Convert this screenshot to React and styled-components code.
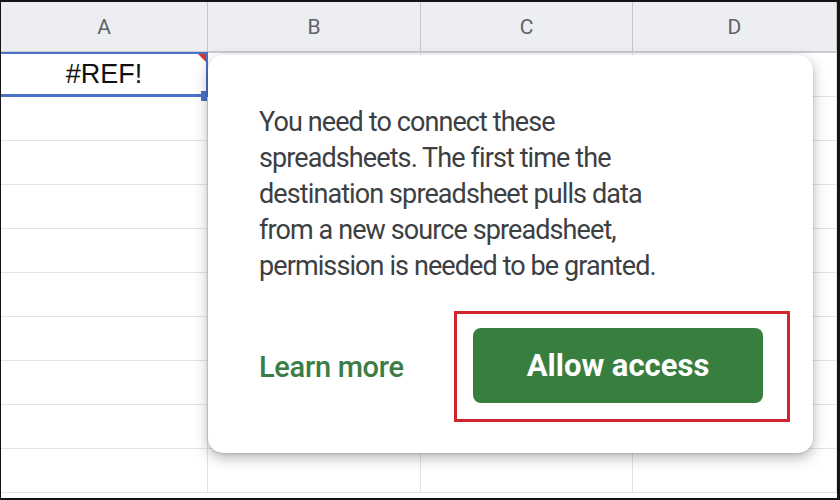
import React from "react";
import styled, { createGlobalStyle } from "styled-components";

const Global = createGlobalStyle`
  html, body { margin: 0; padding: 0; background: #111; }
  body { width: 840px; height: 500px; overflow: hidden; }
  * { box-sizing: border-box; }
`;

const Page = styled.div`
  width: 840px;
  height: 500px;
  padding: 2px 3px 2px 1px;
  background: #141414;
`;

const Sheet = styled.div`
  position: relative;
  width: 100%;
  height: 100%;
  background: #ffffff;
  overflow: hidden;
`;

const COLS = "207px 213px 212px 1fr";

const HeaderRow = styled.div`
  display: grid;
  grid-template-columns: ${COLS};
  height: 51px;
  background: #eceef1;
  border-bottom: 2px solid #c9cbce;
`;

const HeaderCell = styled.div`
  display: flex;
  align-items: center;
  justify-content: center;
  border-right: 1px solid #c4c6c9;
  font-family: Roboto, "Liberation Sans", sans-serif;
  font-size: 21px;
  color: #5f6368;
`;

const Row = styled.div`
  display: grid;
  grid-template-columns: ${COLS};
  height: 44px;
  border-bottom: 1px solid #e2e3e4;
`;

const Cell = styled.div`
  position: relative;
  display: flex;
  align-items: center;
  justify-content: center;
  border-right: 1px solid #e2e3e4;
  font-family: "Liberation Sans", Arial, sans-serif;
  font-size: 27px;
  color: #111;
`;

const Selection = styled.div`
  position: absolute;
  left: -4px;
  right: -1px;
  top: -1px;
  bottom: -1px;
  border: 2px solid #4a72c9;
  border-bottom-width: 3px;
  pointer-events: none;
`;

const Handle = styled.div`
  position: absolute;
  right: -1px;
  bottom: -5px;
  width: 7px;
  height: 10px;
  background: #4a72c9;
`;

const ErrorMark = styled.div`
  position: absolute;
  right: 1px;
  top: 1px;
  width: 0;
  height: 0;
  border-top: 8px solid #d03a34;
  border-left: 8px solid transparent;
`;

const Popup = styled.div`
  position: absolute;
  left: 207px;
  top: 53px;
  width: 605px;
  height: 398px;
  background: #ffffff;
  border-radius: 15px;
  box-shadow: 0 5px 14px rgba(0, 0, 0, 0.28), 0 1px 3px rgba(0, 0, 0, 0.14);
  display: flex;
  flex-direction: column;
  padding: 49px 23px 31px 51px;
`;

const Message = styled.p`
  margin: 0;
  font-family: Roboto, "Liberation Sans", sans-serif;
  font-size: 27px;
  letter-spacing: -0.9px;
  line-height: 36px;
  color: #3c4043;
`;

const Footer = styled.div`
  margin-top: auto;
  display: flex;
  align-items: center;
  justify-content: space-between;
`;

const LinkButton = styled.span`
  font-family: Roboto, "Liberation Sans", sans-serif;
  font-weight: 500;
  font-size: 29px;
  letter-spacing: -0.3px;
  color: #3b7d46;
`;

const Highlight = styled.div`
  width: 336px;
  height: 111px;
  border: 3px solid #d1242c;
  padding: 14px 24px 16px 16px;
  display: flex;
`;

const PrimaryButton = styled.button`
  flex: 1;
  border: none;
  border-radius: 8px;
  background: #377e3f;
  color: #ffffff;
  font-family: Roboto, "Liberation Sans", sans-serif;
  font-weight: 700;
  font-size: 31px;
  padding: 0;
`;

const columns = ["A", "B", "C", "D"];
const lines = [
  "You need to connect these",
  "spreadsheets. The first time the",
  "destination spreadsheet pulls data",
  "from a new source spreadsheet,",
  "permission is needed to be granted.",
];

export default function App() {
  return (
    <>
      <Global />
      <Page>
        <Sheet>
          <HeaderRow>
            {columns.map((c) => (
              <HeaderCell key={c}>{c}</HeaderCell>
            ))}
          </HeaderRow>
          {Array.from({ length: 10 }).map((_, r) => (
            <Row key={r}>
              {columns.map((c, ci) => (
                <Cell key={c}>
                  {r === 0 && ci === 0 && (
                    <>
                      #REF!
                      <Selection />
                      <ErrorMark />
                      <Handle />
                    </>
                  )}
                </Cell>
              ))}
            </Row>
          ))}
          <Popup>
            <Message>
              {lines.map((l, i) => (
                <React.Fragment key={i}>
                  {l}
                  {i < lines.length - 1 && <br />}
                </React.Fragment>
              ))}
            </Message>
            <Footer>
              <LinkButton>Learn more</LinkButton>
              <Highlight>
                <PrimaryButton>Allow access</PrimaryButton>
              </Highlight>
            </Footer>
          </Popup>
        </Sheet>
      </Page>
    </>
  );
}
